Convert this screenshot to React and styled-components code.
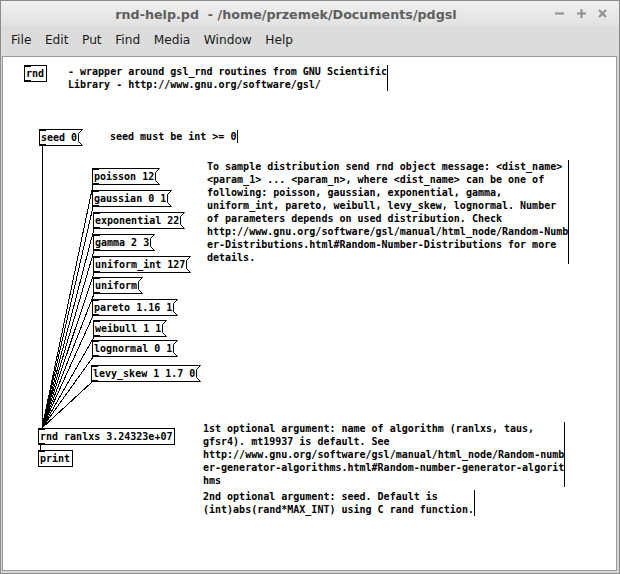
import React from "react";
import styled, { createGlobalStyle } from "styled-components";

const CHAR = 6;
const LINE = 13;
const BOX_H = 17;

// canvas origin in page coordinates
const OX = 3;
const OY = 57;

const messages = [
  { label: "seed 0", x: 39, y: 129 },
  { label: "poisson 12", x: 92, y: 168 },
  { label: "gaussian 0 1", x: 92, y: 190 },
  { label: "exponential 22", x: 93, y: 212 },
  { label: "gamma 2 3", x: 93, y: 234 },
  { label: "uniform_int 127", x: 93, y: 256 },
  { label: "uniform", x: 93, y: 277 },
  { label: "pareto 1.16 1", x: 92, y: 299 },
  { label: "weibull 1 1", x: 93, y: 320 },
  { label: "lognormal 0 1", x: 92, y: 340 },
  { label: "levy_skew 1 1.7 0", x: 91, y: 365 }
];

const objects = [
  { label: "rnd", x: 24, y: 65, outlet: true },
  { label: "rnd ranlxs 3.24323e+07", x: 38, y: 428, outlet: true },
  { label: "print", x: 38, y: 450, outlet: false }
];

const comments = [
  {
    x: 68,
    y: 65,
    chars: 53,
    lines: [
      "- wrapper around gsl_rnd routines from GNU Scientific",
      "Library - http://www.gnu.org/software/gsl/"
    ]
  },
  { x: 110, y: 130, chars: 21, lines: ["seed must be int >= 0"] },
  {
    x: 207,
    y: 160,
    chars: 60,
    lines: [
      "To sample distribution send rnd object message: <dist_name>",
      "<param_1> ... <param_n>, where <dist_name> can be one of",
      "following: poisson, gaussian, exponential, gamma,",
      "uniform_int, pareto, weibull, levy_skew, lognormal. Number",
      "of parameters depends on used distribution. Check",
      "http://www.gnu.org/software/gsl/manual/html_node/Random-Numb",
      "er-Distributions.html#Random-Number-Distributions for more",
      "details."
    ]
  },
  {
    x: 203,
    y: 422,
    chars: 60,
    lines: [
      "1st optional argument: name of algorithm (ranlxs, taus,",
      "gfsr4). mt19937 is default. See",
      "http://www.gnu.org/software/gsl/manual/html_node/Random-numb",
      "er-generator-algorithms.html#Random-number-generator-algorit",
      "hms"
    ]
  },
  {
    x: 203,
    y: 490,
    chars: 45,
    lines: [
      "2nd optional argument: seed. Default is",
      "(int)abs(rand*MAX_INT) using C rand function."
    ]
  }
];

const menus = ["File", "Edit", "Put", "Find", "Media", "Window", "Help"];

const GlobalStyle = createGlobalStyle`
  html, body {
    margin: 0;
    padding: 0;
    background: #ffffff;
  }
  body {
    font-family: "DejaVu Sans", "Noto Sans", sans-serif;
  }
`;

const Window = styled.div`
  width: 620px;
  height: 574px;
  box-sizing: border-box;
  border: 1px solid #8c8c8c;
  background: #d6d6d6;
  display: flex;
  flex-direction: column;
`;

const TitleBar = styled.div`
  height: 25px;
  display: flex;
  align-items: center;
  background: linear-gradient(#efefef, #e2e2e2);
`;

const Title = styled.div`
  flex: 1;
  text-align: center;
  font-weight: bold;
  font-size: 12.7px;
  color: #5e5e5e;
  white-space: pre;
  padding: 1px 0 0 16px;
`;

const Controls = styled.div`
  width: 64px;
  display: flex;
  align-items: center;
  gap: 12.5px;
`;

const MenuBar = styled.div`
  height: 30px;
  display: flex;
  align-items: center;
  padding: 0 0 3px 10px;
  box-sizing: border-box;
  background: #dcdcdc;
`;

const MenuItem = styled.span`
  font-size: 12.2px;
  color: #1a1a1a;
  margin-right: 13.5px;
`;

const Canvas = styled.div`
  flex: 1;
  margin: 0 2px 2px 1px;
  border: 1px solid #9c9c9c;
  background: #ffffff;
  position: relative;
  overflow: hidden;
  font-family: "DejaVu Sans Mono", "Liberation Mono", monospace;
  font-weight: bold;
  font-size: 10px;
  line-height: ${LINE}px;
  color: #000000;
`;

const Wires = styled.svg`
  position: absolute;
  left: 0;
  top: 0;
  width: 100%;
  height: 100%;
`;

const MsgNode = styled.div`
  position: absolute;
  height: ${BOX_H}px;
  box-sizing: border-box;
  padding: 2px 0 0 2px;
  white-space: pre;
`;

const Outline = styled.svg`
  position: absolute;
  left: 0;
  top: 0;
`;

const ObjNode = styled.div`
  position: absolute;
  height: ${BOX_H}px;
  box-sizing: border-box;
  border: 1px solid #000000;
  padding: 1px 0 0 1px;
  white-space: pre;
`;

const Port = styled.span`
  position: absolute;
  left: ${(p) => (p.$framed ? -1 : 0)}px;
  width: 7px;
  height: 2px;
  background: #000000;
  ${(p) => (p.$bottom ? `bottom: ${p.$framed ? -1 : 0}px;` : `top: ${p.$framed ? -1 : 0}px;`)}
`;

const Comment = styled.div`
  position: absolute;
  white-space: pre;
  border-right: 1px solid #000000;
  height: ${(p) => p.$lines * LINE}px;
`;

const Label = styled.span`
  position: relative;
`;

function WinButton({ kind }) {
  return (
    <svg width="9" height="9" viewBox="0 0 9 9">
      <g stroke="#8e8e8e" strokeWidth="2" fill="none">
        {kind === "min" && <line x1="0" y1="4.5" x2="9" y2="4.5" />}
        {kind === "max" && (
          <>
            <line x1="0" y1="4.5" x2="9" y2="4.5" />
            <line x1="4.5" y1="0" x2="4.5" y2="9" />
          </>
        )}
        {kind === "close" && (
          <>
            <line x1="1" y1="1" x2="8" y2="8" />
            <line x1="8" y1="1" x2="1" y2="8" />
          </>
        )}
      </g>
    </svg>
  );
}

function Message({ label, x, y }) {
  const w = label.length * CHAR + 4;
  const h = BOX_H;
  const pts = [
    [0.5, 0.5],
    [w + 3.5, 0.5],
    [w - 0.5, 4.5],
    [w - 0.5, h - 4.5],
    [w + 3.5, h - 0.5],
    [0.5, h - 0.5]
  ]
    .map((p) => p.join(","))
    .join(" ");
  return (
    <MsgNode style={{ left: x - OX, top: y - OY, width: w + 4 }}>
      <Outline width={w + 4} height={h}>
        <polygon points={pts} fill="none" stroke="#000" strokeWidth="1" />
      </Outline>
      <Port />
      <Port $bottom />
      <Label>{label}</Label>
    </MsgNode>
  );
}

function PdObject({ label, x, y, outlet }) {
  return (
    <ObjNode style={{ left: x - OX, top: y - OY, width: label.length * CHAR + 5 }}>
      <Port $framed />
      {outlet && <Port $framed $bottom />}
      {label}
    </ObjNode>
  );
}

function Connections() {
  const target = { x: 42 - OX, y: 428 - OY };
  return (
    <Wires shapeRendering="crispEdges">
      <g stroke="#000" strokeWidth="1">
        <line x1={42.5 - OX} y1={146 - OY} x2={42.5 - OX} y2={428 - OY} />
        {messages.slice(1).map((m) => (
          <line
            key={m.label}
            x1={m.x + 1 - OX}
            y1={m.y + BOX_H - OY}
            x2={target.x}
            y2={target.y}
          />
        ))}
        <line x1={40.5 - OX} y1={445 - OY} x2={40.5 - OX} y2={450 - OY} />
      </g>
    </Wires>
  );
}

export default function App() {
  return (
    <>
      <GlobalStyle />
      <Window>
        <TitleBar>
          <Title>rnd-help.pd  - /home/przemek/Documents/pdgsl</Title>
          <Controls>
            <WinButton kind="min" />
            <WinButton kind="max" />
            <WinButton kind="close" />
          </Controls>
        </TitleBar>
        <MenuBar>
          {menus.map((m) => (
            <MenuItem key={m}>{m}</MenuItem>
          ))}
        </MenuBar>
        <Canvas>
          <Connections />
          {comments.map((c, i) => (
            <Comment
              key={i}
              $lines={c.lines.length}
              style={{ left: c.x - OX, top: c.y - OY, width: c.chars * CHAR + 1 }}
            >
              {c.lines.join("\n")}
            </Comment>
          ))}
          {messages.map((m) => (
            <Message key={m.label} {...m} />
          ))}
          {objects.map((o) => (
            <PdObject key={o.label} {...o} />
          ))}
        </Canvas>
      </Window>
    </>
  );
}
